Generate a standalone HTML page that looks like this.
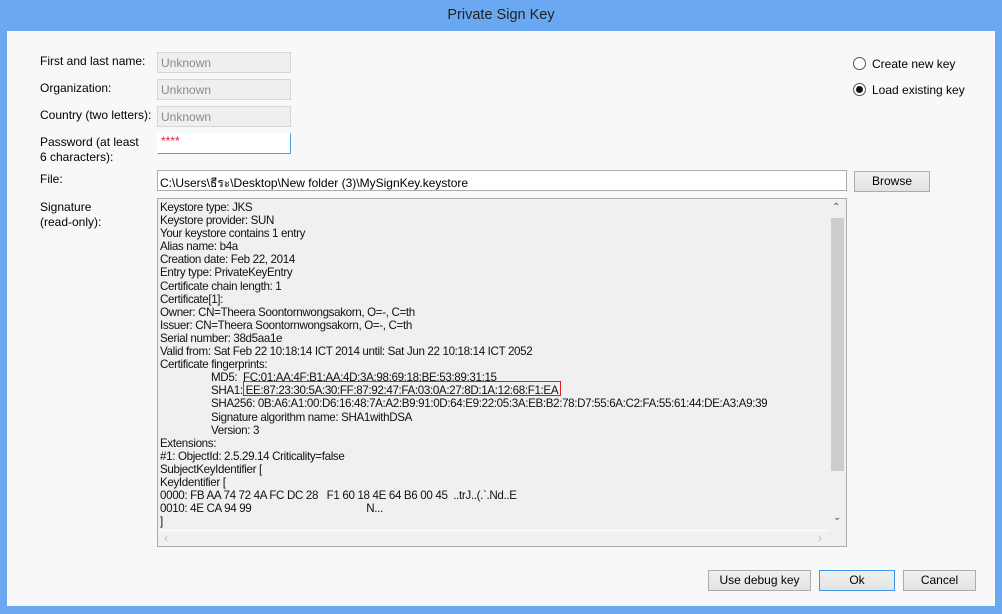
<!DOCTYPE html>
<html><head><meta charset="utf-8"><style>
*{margin:0;padding:0;box-sizing:border-box}
body{width:1002px;height:614px;background:#6aa9f2;font-family:"Liberation Sans","Noto Sans CJK SC",sans-serif;font-size:12px;color:#000;position:relative;overflow:hidden}
.abs{position:absolute}
.title{left:0;top:0;width:1002px;text-align:center;font-size:14.5px;color:#222;top:7px}
.client{left:7px;top:31px;width:988px;height:575px;background:#f7f8f8}
.lbl{font-size:12px;color:#000;line-height:15px}
.inp{background:#efefef;border:1px solid #d6d6d6;color:#8a8a8a;padding:3px 0 0 3px;font-size:12px;height:21px}
.btn{background:linear-gradient(#f0f0f0,#e3e3e3);border:1px solid #acacac;text-align:center;font-size:12px;line-height:19px;height:21px}
.ta{left:157px;top:198px;width:690px;height:349px;background:#f0f0f0;border:1px solid #acacac}
.txt{left:2px;top:2px;font-size:11.6px;line-height:13.1px;letter-spacing:-0.35px;white-space:pre;color:#111}
.i{display:inline-block;width:51px}
.radio{width:13px;height:13px;border:1px solid #555;border-radius:50%;background:#fff}
</style></head><body>
<div class="abs title">Private Sign Key</div>
<div class="abs client"></div>
<div class="abs lbl" style="left:40px;top:54px">First and last name:</div>
<div class="abs lbl" style="left:40px;top:81px">Organization:</div>
<div class="abs lbl" style="left:40px;top:108px">Country (two letters):</div>
<div class="abs lbl" style="left:40px;top:135px">Password (at least<br>6 characters):</div>
<div class="abs lbl" style="left:40px;top:172px">File:</div>
<div class="abs lbl" style="left:40px;top:200px">Signature<br>(read-only):</div>
<div class="abs inp" style="left:157px;top:52px;width:134px">Unknown</div>
<div class="abs inp" style="left:157px;top:79px;width:134px">Unknown</div>
<div class="abs inp" style="left:157px;top:106px;width:134px">Unknown</div>
<div class="abs" style="left:157px;top:133px;width:134px;height:21px;background:#fff;border:1px solid #569de5;border-top-color:#fff;border-left-color:#fff;color:#e0223a;font-size:12px;padding:2px 0 0 3px;line-height:11px">****</div>
<div class="abs" style="left:157px;top:170px;width:690px;height:21px;background:#fff;border:1px solid #acacac;padding:3px 0 0 2px;font-size:12px">C:\Users\ธีระ\Desktop\New folder (3)\MySignKey.keystore</div>
<div class="abs btn" style="left:854px;top:171px;width:76px">Browse</div>
<div class="abs radio" style="left:853px;top:57px"></div>
<div class="abs lbl" style="left:872px;top:57px">Create new key</div>
<div class="abs radio" style="left:853px;top:83px"><div style="width:7px;height:7px;border-radius:50%;background:#111;margin:2px"></div></div>
<div class="abs lbl" style="left:872px;top:83px">Load existing key</div>
<div class="abs ta">
<div class="abs txt">Keystore type: JKS
Keystore provider: SUN
Your keystore contains 1 entry
Alias name: b4a
Creation date: Feb 22, 2014
Entry type: PrivateKeyEntry
Certificate chain length: 1
Certificate[1]:
Owner: CN=Theera Soontornwongsakorn, O=-, C=th
Issuer: CN=Theera Soontornwongsakorn, O=-, C=th
Serial number: 38d5aa1e
Valid from: Sat Feb 22 10:18:14 ICT 2014 until: Sat Jun 22 10:18:14 ICT 2052
Certificate fingerprints:
<span class="i"></span>MD5:  FC:01:AA:4F:B1:AA:4D:3A:98:69:18:BE:53:89:31:15
<span class="i"></span>SHA1: EE:87:23:30:5A:30:FF:87:92:47:FA:03:0A:27:8D:1A:12:68:F1:EA
<span class="i"></span>SHA256: 0B:A6:A1:00:D6:16:48:7A:A2:B9:91:0D:64:E9:22:05:3A:EB:B2:78:D7:55:6A:C2:FA:55:61:44:DE:A3:A9:39
<span class="i"></span>Signature algorithm name: SHA1withDSA
<span class="i"></span>Version: 3
Extensions:
#1: ObjectId: 2.5.29.14 Criticality=false
SubjectKeyIdentifier [
KeyIdentifier [
0000: FB AA 74 72 4A FC DC 28   F1 60 18 4E 64 B6 00 45  ..trJ..(.`.Nd..E
0010: 4E CA 94 99                                        N...
]</div>
<div class="abs" style="left:85px;top:182px;width:318px;height:15px;border:1px solid #e02020"></div>
<div class="abs" style="left:671px;top:0;width:17px;height:331px;background:#f0f0f0"></div>
<div class="abs" style="left:673px;top:19px;width:13px;height:253px;background:#cdcdcd"></div>
<div class="abs" style="left:674px;top:3px;font-size:10px;color:#555">&#8963;</div>
<div class="abs" style="left:675px;top:313px;font-size:10px;color:#555">&#8964;</div>
<div class="abs" style="left:0;top:331px;width:671px;height:16px;border-top:1px solid #fff;color:#bbb;font-size:12px"><span style="position:absolute;left:6px;top:0">&lsaquo;</span><span style="position:absolute;left:660px;top:0">&rsaquo;</span></div>
</div>
<div class="abs btn" style="left:708px;top:570px;width:103px">Use debug key</div>
<div class="abs btn" style="left:819px;top:570px;width:76px;border-color:#3c9ae8">Ok</div>
<div class="abs btn" style="left:903px;top:570px;width:73px">Cancel</div>
</body></html>
